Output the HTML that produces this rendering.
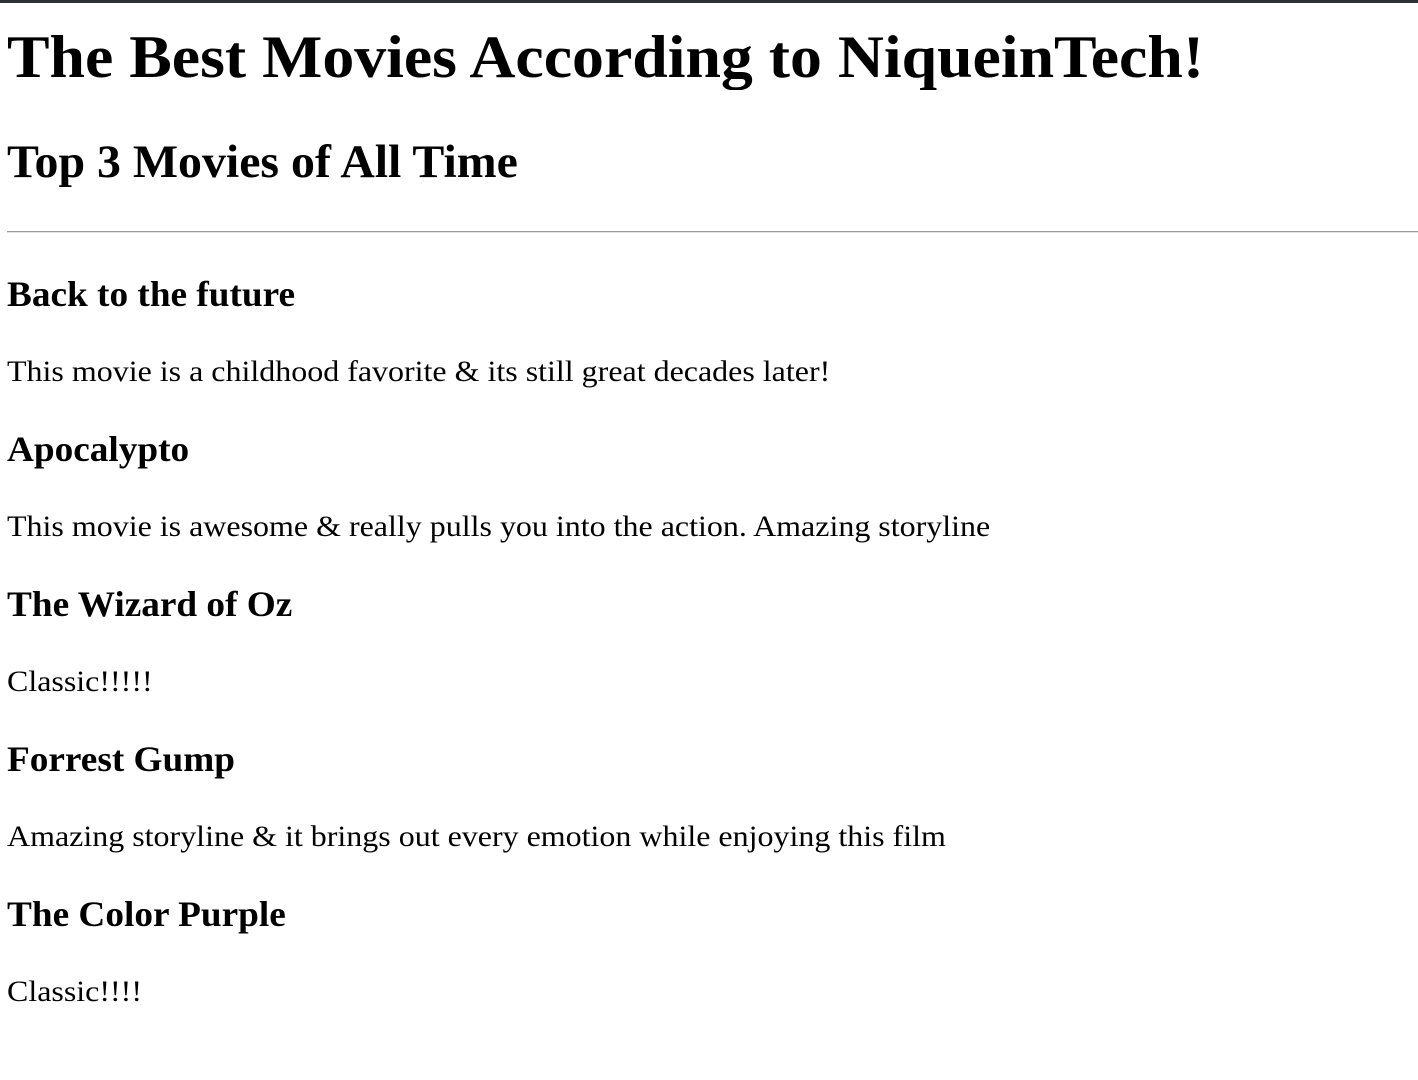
<!DOCTYPE html>
<html><head><meta charset="utf-8"><style>
html,body{margin:0;padding:0;background:#fff;width:1418px;height:1080px;overflow:hidden;}
body{font-family:"Liberation Serif",serif;color:#000;position:relative;}
.t{position:absolute;left:7px;line-height:1;white-space:nowrap;transform-origin:0 0;}
.b{font-weight:bold;}
.h3{font-size:36px;font-weight:bold;transform:scaleX(1.035);}
.p{font-size:30px;transform:scaleX(1.066);}
</style></head><body>
<div style="position:absolute;left:0;top:0;width:1418px;height:3px;background:#2b2f36"></div>
<div class="t b" style="font-size:60px;top:27px;transform:scaleX(1.063)">The Best Movies According to NiqueinTech!</div>
<div class="t b" style="font-size:47px;top:139px;transform:scaleX(1.018)">Top 3 Movies of All Time</div>
<div style="position:absolute;left:7px;top:231px;width:1411px;height:1px;background:#999;border-bottom:1px solid #e4e4e4"></div>
<div class="t h3" style="top:276px">Back to the future</div>
<div class="t p" style="top:357px">This movie is a childhood favorite &amp; its still great decades later!</div>
<div class="t h3" style="top:431px">Apocalypto</div>
<div class="t p" style="top:512px">This movie is awesome &amp; really pulls you into the action. Amazing storyline</div>
<div class="t h3" style="top:586px">The Wizard of Oz</div>
<div class="t p" style="top:667px">Classic!!!!!</div>
<div class="t h3" style="top:741px">Forrest Gump</div>
<div class="t p" style="top:822px">Amazing storyline &amp; it brings out every emotion while enjoying this film</div>
<div class="t h3" style="top:896px">The Color Purple</div>
<div class="t p" style="top:977px">Classic!!!!</div>
</body></html>
